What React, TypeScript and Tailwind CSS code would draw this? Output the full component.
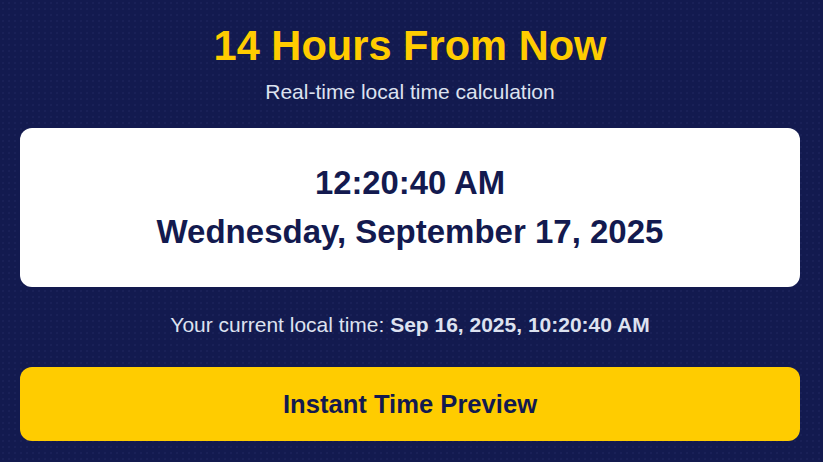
import React from 'react';

const App: React.FC = () => {
    return (
        <div className="min-h-[462px] bg-[#131a4f] bg-[radial-gradient(rgba(110,120,200,0.07)_1px,transparent_1.2px)] bg-[size:6px_6px] pt-[21px] pb-5 pl-5 pr-[23px] font-['Liberation_Sans',Arial,sans-serif]">
            <h1 className="text-center text-[41.6px] leading-[50px] font-bold text-[#ffcc00]">14 Hours From Now</h1>
            <p className="mt-[5px] text-center text-[21px] leading-[31px] text-[#dde2f0]">Real-time local time calculation</p>

            <div className="mt-[21px] flex flex-col items-center gap-[10px] rounded-[12px] bg-white pt-[36px] pb-[35px] text-[#131a4f]">
                <div className="text-[32.8px] leading-[38px] font-bold">12:20:40 AM</div>
                <div className="text-[33px] leading-[40px] font-bold">Wednesday, September 17, 2025</div>
            </div>

            <p className="mt-[23px] text-center text-[21px] leading-[30px] text-[#dde2f0]">
                Your current local time: <strong className="font-bold">Sep 16, 2025, 10:20:40 AM</strong>
            </p>

            <button className="mt-[27px] flex h-[74px] w-full items-center justify-center rounded-[12px] bg-[#ffcc00] text-[25.6px] font-bold text-[#131a4f]">
                Instant Time Preview
            </button>
        </div>
    );
};

export default App;
